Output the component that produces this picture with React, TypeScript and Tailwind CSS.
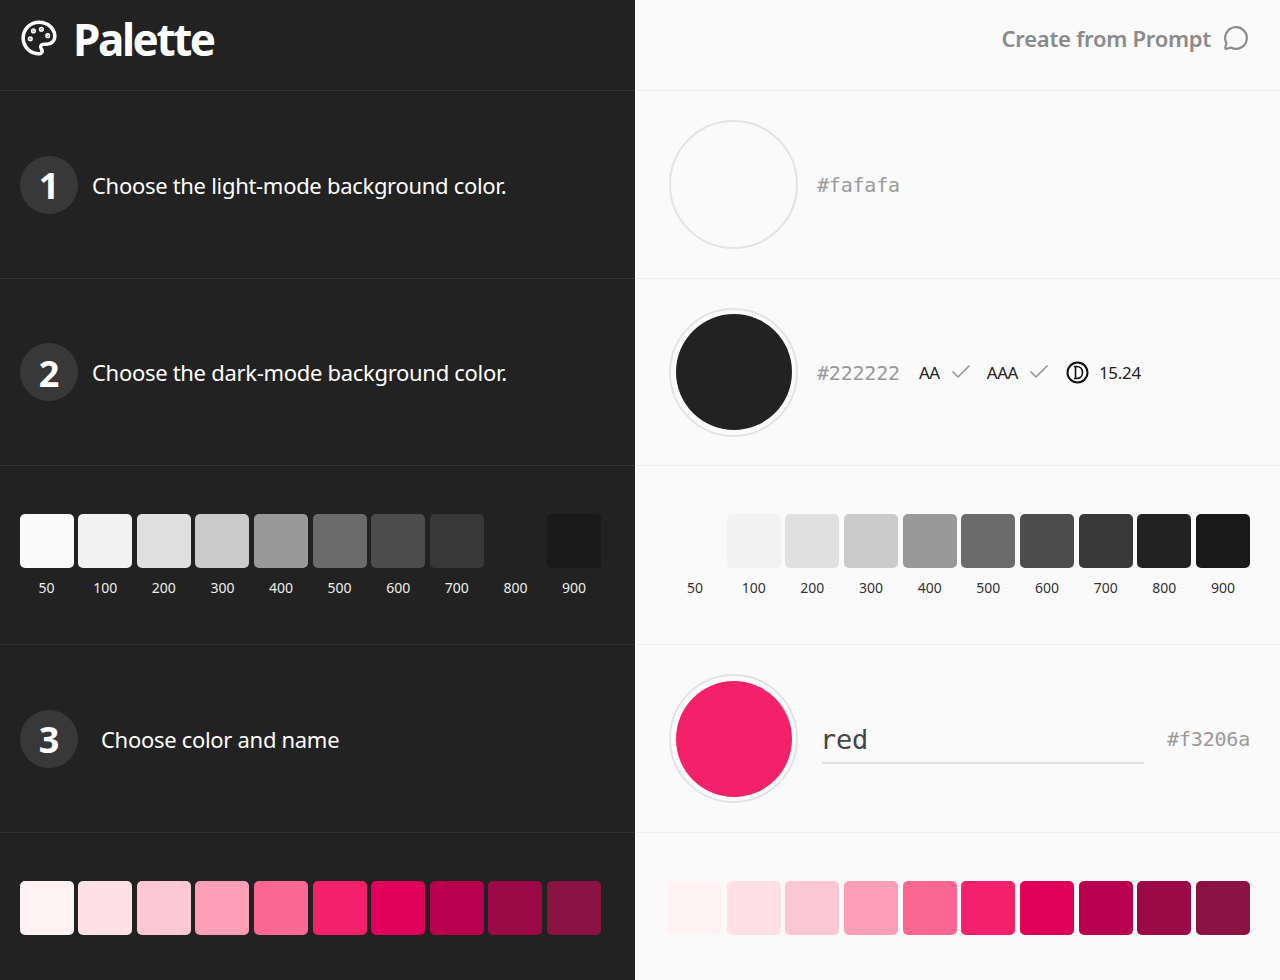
import { Palette, MessageCircle, Check } from "lucide-react";

const grays = ["#fafafa", "#f2f2f2", "#e0e0e0", "#cbcbcb", "#999999", "#6b6b6b", "#4c4c4c", "#383838", "#222222", "#191919"];
const reds = ["#fff2f5", "#ffe0e7", "#fdc8d6", "#fb9eb6", "#fa6790", "#f3206a", "#e0005a", "#b9004f", "#9b0a47", "#8a1342"];
const labels = ["50", "100", "200", "300", "400", "500", "600", "700", "800", "900"];

function Swatches({ colors, showLabels, dark }: { colors: string[]; showLabels?: boolean; dark?: boolean }) {
  return (
    <div className="grid grid-cols-10 gap-x-[4.6px] w-full">
      {colors.map((c, i) => (
        <div key={labels[i]} className="flex flex-col items-center">
          <div className="w-full h-[54px] rounded-[5px]" style={{ backgroundColor: c }} />
          {showLabels && (
            <span className={`mt-[10px] text-[14px] leading-[20px] ${dark ? "text-[#eeeeee]" : "text-[#333333]"}`}>
              {labels[i]}
            </span>
          )}
        </div>
      ))}
    </div>
  );
}

function Step({ n, text, gap }: { n: number; text: string; gap: string }) {
  return (
    <div className={`flex items-center px-5 border-b border-[#333333] ${gap}`}>
      <div className="w-[58px] h-[58px] rounded-full bg-[#383838] flex items-center justify-center pt-[3px] text-[36px] font-bold text-white shrink-0">
        {n}
      </div>
      <span className="pt-[1px] text-[22px] tracking-[-0.3px] text-white">{text}</span>
    </div>
  );
}

function Circle({ color, ring }: { color: string; ring?: boolean }) {
  return (
    <div className="w-[129px] h-[129px] rounded-full border-2 border-[#e3e3e3] flex items-center justify-center shrink-0">
      {ring && <div className="w-[116px] h-[116px] rounded-full" style={{ backgroundColor: color }} />}
    </div>
  );
}

function ContrastIcon() {
  return (
    <svg width="23" height="23" viewBox="0 0 23 23" fill="none" stroke="#111111">
      <circle cx="11.5" cy="11.5" r="10" strokeWidth="2" />
      <path d="M8 5.5h2.5c3.6 0 6 2.4 6 6s-2.4 6-6 6H8" strokeWidth="1.6" />
      <path d="M9.5 5.5v12" strokeWidth="1.6" />
    </svg>
  );
}

export default function App() {
  return (
    <div
      className="w-[1280px] h-[980px] overflow-hidden grid grid-cols-[635px_645px] bg-[#fafafa]"
      style={{ fontFamily: '"Noto Sans", sans-serif' }}
    >
      {/* Left column */}
      <div className="bg-[#222222] grid grid-rows-[91px_188px_187px_179px_188px_147px]">
        <div className="flex items-center px-5 pb-[14px] gap-[15px] border-b border-[#333333]">
          <Palette className="w-[38px] h-[38px] text-white" strokeWidth={2.25} />
          <h1 className="pt-[2px] text-[44px] font-bold tracking-[-2.4px] text-white">Palette</h1>
        </div>
        <Step n={1} text="Choose the light-mode background color." gap="gap-[14px]" />
        <Step n={2} text="Choose the dark-mode background color." gap="gap-[14px]" />
        <div className="pl-[19.6px] pt-[48px] pr-[34px] border-b border-[#333333]">
          <Swatches colors={grays.map((c) => (c === "#222222" ? "transparent" : c))} showLabels dark />
        </div>
        <Step n={3} text="Choose color and name" gap="gap-[23px]" />
        <div className="pl-[19.6px] pt-[48px] pr-[34px]">
          <Swatches colors={reds} />
        </div>
      </div>

      {/* Right column */}
      <div className="grid grid-rows-[91px_188px_187px_179px_188px_147px]">
        <div className="flex items-center justify-end gap-3 pr-[31px] pb-[14px] border-b border-[#eeeeee]">
          <span className="text-[22px] font-semibold tracking-[-0.26px] text-[#8a8a8a]">Create from Prompt</span>
          <MessageCircle className="w-[26px] h-[26px] text-[#8a8a8a]" strokeWidth={2} />
        </div>
        <div className="flex items-center pl-[34px] gap-[19px] border-b border-[#eeeeee]">
          <Circle color="#fafafa" />
          <span className="pt-[1px] font-['DejaVu_Sans_Mono'] text-[20px] tracking-[-0.2px] text-[#999999]">#fafafa</span>
        </div>
        <div className="flex items-center pl-[34px] border-b border-[#eeeeee]">
          <Circle color="#222222" ring />
          <span className="ml-[19px] pt-[1px] font-['DejaVu_Sans_Mono'] text-[20px] tracking-[-0.2px] text-[#999999]">#222222</span>
          <span className="ml-[19px] pt-[1px] text-[17px] tracking-[-0.4px] text-[#222222]">AA</span>
          <Check className="ml-[9px] w-[24px] h-[24px] text-[#999999]" strokeWidth={1.75} />
          <span className="ml-[14px] pt-[1px] text-[17px] tracking-[-0.5px] text-[#222222]">AAA</span>
          <Check className="ml-[9px] w-[24px] h-[24px] text-[#999999]" strokeWidth={1.75} />
          <div className="ml-[15px]">
            <ContrastIcon />
          </div>
          <span className="ml-[10px] pt-[1px] text-[17px] tracking-[-0.3px] text-[#222222]">15.24</span>
        </div>
        <div className="pl-[33px] pr-[30px] pt-[48px] border-b border-[#eeeeee]">
          <Swatches colors={grays.map((c) => (c === "#fafafa" ? "transparent" : c))} showLabels />
        </div>
        <div className="flex items-center pl-[34px] pr-[30px] border-b border-[#eeeeee]">
          <Circle color="#f3206a" ring />
          <div className="ml-6 w-[322px] h-[50px] border-b-2 border-[#e0e0e0] flex items-center pt-[6px] font-['DejaVu_Sans_Mono'] text-[27px] tracking-[-0.3px] text-[#444444]">
            <span className="-ml-[2px]">red</span>
          </div>
          <span className="ml-auto pt-[1px] font-['DejaVu_Sans_Mono'] text-[20px] tracking-[-0.2px] text-[#999999]">#f3206a</span>
        </div>
        <div className="pl-[33px] pr-[30px] pt-[48px]">
          <Swatches colors={reds} />
        </div>
      </div>
    </div>
  );
}
